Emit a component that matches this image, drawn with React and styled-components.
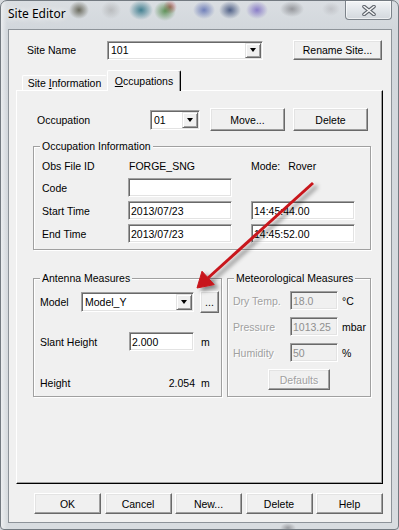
import React from "react";
import styled, { createGlobalStyle } from "styled-components";

const GlobalStyle = createGlobalStyle`
  html, body { margin: 0; padding: 0; }
  body { width: 399px; height: 530px; overflow: hidden; background: #d6dade; }
  * { box-sizing: border-box; }
`;

const Window = styled.div`
  position: relative;
  width: 399px;
  height: 530px;
  display: flex;
  flex-direction: column;
  padding: 0 6px 6px 7px;
  border: 1px solid #737a81;
  border-radius: 7px 7px 4px 4px;
  overflow: hidden;
  background:
    radial-gradient(ellipse 10px 9px at 78px 9px, rgba(70, 68, 50, 0.75), rgba(70, 68, 50, 0) 100%),
    radial-gradient(ellipse 10px 9px at 110px 9px, rgba(150, 150, 150, 0.45), rgba(150, 150, 150, 0) 100%),
    radial-gradient(ellipse 12px 10px at 140px 9px, rgba(30, 105, 125, 0.8), rgba(30, 105, 125, 0) 100%),
    radial-gradient(ellipse 11px 10px at 164px 10px, rgba(60, 125, 50, 0.75), rgba(60, 125, 50, 0) 100%),
    radial-gradient(ellipse 7px 7px at 169px 6px, rgba(170, 40, 40, 0.65), rgba(170, 40, 40, 0) 100%),
    radial-gradient(ellipse 11px 9px at 203px 9px, rgba(70, 90, 170, 0.7), rgba(70, 90, 170, 0) 100%),
    radial-gradient(ellipse 11px 9px at 229px 9px, rgba(35, 55, 105, 0.75), rgba(35, 55, 105, 0) 100%),
    radial-gradient(ellipse 11px 9px at 256px 9px, rgba(105, 85, 190, 0.7), rgba(105, 85, 190, 0) 100%),
    radial-gradient(ellipse 12px 8px at 291px 8px, rgba(105, 105, 110, 0.6), rgba(105, 105, 110, 0) 100%),
    radial-gradient(ellipse 9px 7px at 330px 8px, rgba(165, 165, 170, 0.45), rgba(165, 165, 170, 0) 100%),
    radial-gradient(ellipse 8px 5px at 287px 527px, rgba(90, 90, 95, 0.5), rgba(90, 90, 95, 0) 100%),
    linear-gradient(90deg, rgba(255, 255, 255, 0.55) 0, rgba(255, 255, 255, 0) 6px),
    linear-gradient(180deg, #dadee2 0, #d2d7dc 28px, #d8dce0 100%);
  font-family: "Liberation Sans", Arial, sans-serif;
  font-size: 10.5px;
  color: #000;
`;

const TitleBar = styled.div`
  flex: none;
  height: 28px;
  display: flex;
  justify-content: space-between;
  align-items: flex-start;
`;

const Title = styled.div`
  padding-top: 5px;
  font-family: "Noto Sans", "Open Sans", sans-serif;
  font-size: 12px;
  line-height: 16px;
  color: #000;
  text-shadow: 0 0 6px #fff, 0 0 10px #fff;
`;

const CloseButton = styled.div`
  width: 47px;
  height: 19px;
  display: flex;
  align-items: center;
  justify-content: center;
  border: 1px solid #7c838a;
  border-top: none;
  border-radius: 0 0 4px 4px;
  background: linear-gradient(180deg, #f3f5f7 0%, #e2e6ea 50%, #d3d8dd 100%);
  box-shadow: inset 0 0 0 1px rgba(255, 255, 255, 0.6);
`;

const Client = styled.div`
  flex: 1;
  display: flex;
  flex-direction: column;
  background: #f0f0f0;
  border: 1px solid #8d9399;
`;

const SiteRow = styled.div`
  margin: 10px 0 0 18px;
  height: 20px;
  display: grid;
  grid-template-columns: 80px 156px 30px 89px;
  align-items: center;
`;

const Label = styled.span`
  white-space: nowrap;
  color: ${(p) => (p.$disabled ? "#a0a0a0" : "#000")};
  text-shadow: ${(p) => (p.$disabled ? "1px 1px 0 #fff" : "none")};
  text-align: ${(p) => p.$align || "left"};
  padding-left: ${(p) => p.$pad || 0}px;
`;

const Button = styled.button`
  width: ${(p) => p.$w}px;
  height: ${(p) => p.$h || 21}px;
  margin: 0;
  padding: 0;
  font: inherit;
  color: ${(p) => (p.disabled ? "#a0a0a0" : "#000")};
  text-shadow: ${(p) => (p.disabled ? "1px 1px 0 #fff" : "none")};
  background: #f0f0f0;
  border: 1px solid;
  border-color: #fff #696969 #696969 #fff;
  box-shadow: inset -1px -1px #a0a0a0, inset 1px 1px #e3e3e3;
  justify-self: ${(p) => p.$justify || "start"};
  align-self: center;
`;

const Field = styled.div`
  width: ${(p) => p.$w}px;
  height: ${(p) => p.$h || 19}px;
  padding: 0 2px;
  display: flex;
  align-items: center;
  white-space: nowrap;
  background: ${(p) => (p.$disabled ? "#f0f0f0" : "#fff")};
  color: ${(p) => (p.$disabled ? "#8f8f8f" : "#000")};
  border: 1px solid;
  border-color: #a0a0a0 #fff #fff #a0a0a0;
  box-shadow: inset 1px 1px #696969, inset -1px -1px #e3e3e3;
`;

const Combo = styled(Field)`
  padding: 1px 1px 1px 3px;
`;

const ComboText = styled.span`
  flex: 1;
`;

const DropButton = styled.span`
  width: 16px;
  height: 100%;
  display: flex;
  align-items: center;
  justify-content: center;
  background: #f0f0f0;
  border: 1px solid;
  border-color: #e3e3e3 #696969 #696969 #e3e3e3;
  box-shadow: inset 1px 1px #fff, inset -1px -1px #a0a0a0;

  &::after {
    content: "";
    border-left: 3.5px solid transparent;
    border-right: 3.5px solid transparent;
    border-top: 4px solid #000;
  }
`;

const TabStrip = styled.div`
  position: relative;
  z-index: 2;
  margin-top: 10px;
  padding-left: 13px;
  height: 20px;
  display: flex;
  align-items: flex-end;
`;

const Tab = styled.div`
  width: ${(p) => p.$w}px;
  height: ${(p) => (p.$active ? 21 : 15)}px;
  margin-bottom: ${(p) => (p.$active ? -1 : 0)}px;
  padding-top: ${(p) => (p.$active ? 3 : 0)}px;
  display: flex;
  justify-content: center;
  line-height: 14px;
  white-space: nowrap;
  background: #f0f0f0;
  border-top: 1px solid #fff;
  border-left: 1px solid #fff;
  border-right: 1px solid ${(p) => (p.$active ? "#000" : "#f0f0f0")};
  border-radius: 2px 2px 0 0;
  box-shadow: ${(p) => (p.$active ? "inset -1px 0 #a0a0a0" : "none")};
`;

const Panel = styled.div`
  position: relative;
  z-index: 1;
  margin-left: 7px;
  width: 367px;
  height: 394px;
  display: flex;
  flex-direction: column;
  border-top: 1px solid #fff;
  border-left: 1px solid #fff;
  border-right: 1px solid #000;
  border-bottom: 1px solid #000;
  box-shadow: inset -1px -1px #a0a0a0;
`;

const OccRow = styled.div`
  margin: 17px 0 0 20px;
  height: 23px;
  display: grid;
  grid-template-columns: 113px 60px 83px 75px;
  align-items: center;
`;

const Group = styled.div`
  position: relative;
  width: ${(p) => p.$w}px;
  height: ${(p) => p.$h}px;
  display: flex;
  flex-direction: column;
  border: 1px solid #a0a0a0;
  box-shadow: inset 1px 1px #fff, 1px 1px #fff;
`;

const Caption = styled.span`
  position: absolute;
  top: -7px;
  left: 6px;
  padding: 0 2px;
  line-height: 12px;
  white-space: nowrap;
  background: #f0f0f0;
`;

const InfoGroup = styled(Group)`
  margin: 15px 0 0 16px;
  padding-left: 8px;
`;

const InfoRow = styled.div`
  margin-top: ${(p) => p.$top}px;
  height: ${(p) => p.$h || 19}px;
  display: grid;
  grid-template-columns: 86px 104px 19px 104px;
  align-items: center;
`;

const Mode = styled.span`
  grid-column: 4;
  white-space: nowrap;

  & > b {
    font-weight: normal;
    margin-right: 8px;
  }
`;

const MeasureRow = styled.div`
  margin: 28px 0 0 16px;
  display: flex;
  gap: 5px;
`;

const AntennaGroup = styled(Group)`
  padding-left: 6px;
`;

const ModelRow = styled.div`
  margin-top: 12px;
  height: 22px;
  display: grid;
  grid-template-columns: 41px 119px 19px;
  align-items: center;
`;

const HeightRow = styled.div`
  margin-top: ${(p) => p.$top}px;
  height: 19px;
  display: grid;
  grid-template-columns: 89px 65px 7px auto;
  align-items: center;
`;

const Value = styled.span`
  text-align: right;
  margin-right: -1px;
`;

const MeteoGroup = styled(Group)`
  padding-left: 5px;
`;

const MeteoRow = styled.div`
  margin-top: ${(p) => p.$top}px;
  height: 19px;
  display: grid;
  grid-template-columns: 57px 48px 4px auto;
  align-items: center;
`;

const DefaultsWrap = styled.div`
  margin: 7px 0 0 -5px;
  display: flex;
  justify-content: center;
`;

const Footer = styled.div`
  margin-top: 9px;
  padding-left: 25px;
  display: flex;
  gap: 3.5px;
`;

const ArrowLayer = styled.svg`
  position: absolute;
  left: 0;
  top: 0;
  pointer-events: none;
  z-index: 5;
`;

const CloseGlyph = () => (
  <svg width="14" height="11" viewBox="0 0 14 11">
    <path d="M2 1.5 L12 9.5 M12 1.5 L2 9.5" stroke="#5f656c" strokeWidth="3.6" strokeLinecap="round" fill="none" />
    <path d="M2 1.5 L12 9.5 M12 1.5 L2 9.5" stroke="#f6f7f8" strokeWidth="1.6" strokeLinecap="round" fill="none" />
  </svg>
);

const RedArrow = () => (
  <ArrowLayer width="399" height="530" viewBox="0 0 399 530">
    <defs>
      <filter id="arrowShadow" x="-30%" y="-30%" width="160%" height="160%">
        <feDropShadow dx="4" dy="3" stdDeviation="2" floodColor="#000" floodOpacity="0.45" />
      </filter>
    </defs>
    <g filter="url(#arrowShadow)" fill="#c8161c" stroke="#c8161c">
      <line x1="312" y1="182" x2="207" y2="277" strokeWidth="3" />
      <polygon points="196,287 213.2,283.6 201,270.2" strokeWidth="1" strokeLinejoin="round" />
    </g>
  </ArrowLayer>
);

export default function App() {
  return (
    <>
      <GlobalStyle />
      <Window>
        <TitleBar>
          <Title>Site Editor</Title>
          <CloseButton>
            <CloseGlyph />
          </CloseButton>
        </TitleBar>
        <Client>
          <SiteRow>
            <Label>Site Name</Label>
            <Combo $w={156} $h={19}>
              <ComboText>101</ComboText>
              <DropButton />
            </Combo>
            <span />
            <Button $w={89} $h={20}>Rename Site...</Button>
          </SiteRow>

          <TabStrip>
            <Tab $w={85}>
              Site&nbsp;<u>I</u>nformation
            </Tab>
            <Tab $w={74} $active>
              <span><u>O</u>ccupations</span>
            </Tab>
          </TabStrip>

          <Panel>
            <OccRow>
              <Label>Occupation</Label>
              <Combo $w={50} $h={20}>
                <ComboText>01</ComboText>
                <DropButton />
              </Combo>
              <Button $w={75} $h={23}>Move...</Button>
              <Button $w={75} $h={23}>Delete</Button>
            </OccRow>

            <InfoGroup $w={338} $h={104}>
              <Caption>Occupation Information</Caption>
              <InfoRow $top={8} $h={21}>
                <Label>Obs File ID</Label>
                <Label $pad={1}>FORGE_SNG</Label>
                <Mode>
                  <b>Mode:</b>Rover
                </Mode>
              </InfoRow>
              <InfoRow $top={2}>
                <Label>Code</Label>
                <Field $w={104} />
              </InfoRow>
              <InfoRow $top={4}>
                <Label>Start Time</Label>
                <Field $w={104}>2013/07/23</Field>
                <span />
                <Field $w={104}>14:45:44.00</Field>
              </InfoRow>
              <InfoRow $top={4}>
                <Label>End Time</Label>
                <Field $w={104}>2013/07/23</Field>
                <span />
                <Field $w={104}>14:45:52.00</Field>
              </InfoRow>
            </InfoGroup>

            <MeasureRow>
              <AntennaGroup $w={189} $h={119}>
                <Caption>Antenna Measures</Caption>
                <ModelRow>
                  <Label>Model</Label>
                  <Combo $w={113} $h={20}>
                    <ComboText>Model_Y</ComboText>
                    <DropButton />
                  </Combo>
                  <Button $w={19} $h={22}>...</Button>
                </ModelRow>
                <HeightRow $top={19}>
                  <Label>Slant Height</Label>
                  <Field $w={65}>2.000</Field>
                  <span />
                  <Label>m</Label>
                </HeightRow>
                <HeightRow $top={22}>
                  <Label>Height</Label>
                  <Value>2.054</Value>
                  <span />
                  <Label>m</Label>
                </HeightRow>
              </AntennaGroup>

              <MeteoGroup $w={144} $h={119}>
                <Caption>Meteorological Measures</Caption>
                <MeteoRow $top={12}>
                  <Label $disabled>Dry Temp.</Label>
                  <Field $w={48} $disabled>18.0</Field>
                  <span />
                  <Label>°C</Label>
                </MeteoRow>
                <MeteoRow $top={7}>
                  <Label $disabled>Pressure</Label>
                  <Field $w={48} $disabled>1013.25</Field>
                  <span />
                  <Label>mbar</Label>
                </MeteoRow>
                <MeteoRow $top={7}>
                  <Label $disabled>Humidity</Label>
                  <Field $w={48} $disabled>50</Field>
                  <span />
                  <Label>%</Label>
                </MeteoRow>
                <DefaultsWrap>
                  <Button $w={62} $h={21} disabled>Defaults</Button>
                </DefaultsWrap>
              </MeteoGroup>
            </MeasureRow>
          </Panel>

          <Footer>
            <Button $w={67}>OK</Button>
            <Button $w={67}>Cancel</Button>
            <Button $w={67}>New...</Button>
            <Button $w={67}>Delete</Button>
            <Button $w={67}>Help</Button>
          </Footer>
        </Client>
        <RedArrow />
      </Window>
    </>
  );
}
